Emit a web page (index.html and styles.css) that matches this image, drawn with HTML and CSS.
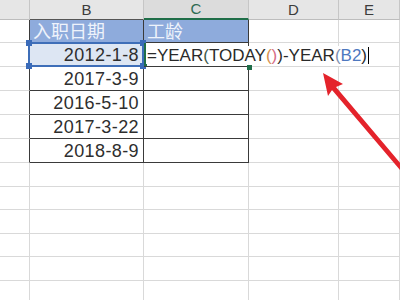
FILE: index.html
```html
<!DOCTYPE html>
<html lang="zh-CN">
<head>
    <meta charset="UTF-8">
    <title>工龄计算</title>
    <link rel="stylesheet" href="styles.css">
</head>
<body>
    <div class="sheet-wrap">
        <table class="sheet">
            <colgroup>
                <col class="col-a">
                <col class="col-b">
                <col class="col-c">
                <col class="col-d">
                <col class="col-e">
            </colgroup>
            <tr class="colhead">
                <th></th>
                <th class="tb-top">B</th>
                <th class="tb-top active">C</th>
                <th>D</th>
                <th>E</th>
            </tr>
            <tr class="r-title">
                <td class="tl"></td>
                <td class="tb title">入职日期</td>
                <td class="tb title">工龄</td>
                <td></td>
                <td></td>
            </tr>
            <tr>
                <td class="tl"></td>
                <td class="tb date picked">2012-1-8<span class="sel"><i class="h h1"></i><i class="h h2"></i><i class="h h3"></i><i class="h h4"></i></span></td>
                <td class="tb editing"><span class="edit">=YEAR<span class="p1">(</span>TODAY<span class="p2">(</span><span class="p3">)</span>)-YEAR<span class="p4">(</span><span class="ref">B2</span>)<span class="caret"></span></span><i class="fill"></i></td>
                <td></td>
                <td></td>
            </tr>
            <tr>
                <td class="tl"></td>
                <td class="tb date">2017-3-9</td>
                <td class="tb"></td>
                <td></td>
                <td></td>
            </tr>
            <tr>
                <td class="tl"></td>
                <td class="tb date">2016-5-10</td>
                <td class="tb"></td>
                <td></td>
                <td></td>
            </tr>
            <tr>
                <td class="tl"></td>
                <td class="tb date">2017-3-22</td>
                <td class="tb"></td>
                <td></td>
                <td></td>
            </tr>
            <tr>
                <td class="tl"></td>
                <td class="tb date">2018-8-9</td>
                <td class="tb"></td>
                <td></td>
                <td></td>
            </tr>
            <tr class="r-low"><td></td><td></td><td></td><td></td><td></td></tr>
            <tr class="r-low"><td></td><td></td><td></td><td></td><td></td></tr>
            <tr class="r-low"><td></td><td></td><td></td><td></td><td></td></tr>
            <tr class="r-low"><td></td><td></td><td></td><td></td><td></td></tr>
            <tr class="r-low"><td></td><td></td><td></td><td></td><td></td></tr>
            <tr class="r-low"><td></td><td></td><td></td><td></td><td></td></tr>
        </table>

        <!-- 红色箭头 -->
        <svg class="arrow" width="400" height="300" viewBox="0 0 400 300">
            <polygon fill="#e4232b" points="323,73 343,84 336,87 402,165 400,170 332,90 328,96"/>
        </svg>
    </div>
</body>
</html>
```

FILE: styles.css
```css
body {
    margin: 0;
    background: #fff;
    font-family: "Liberation Sans", "Noto Sans CJK SC", sans-serif;
    overflow: hidden;
}
.sheet-wrap {
    position: relative;
    width: 400px;
    height: 300px;
    overflow: hidden;
}
.sheet {
    border-collapse: separate;
    border-spacing: 0;
    table-layout: fixed;
    width: 400px;
}
.col-a { width: 30px; }
.col-b { width: 114px; }
.col-c { width: 105px; }
.col-d { width: 90px; }
.col-e { width: 61px; }

td, th {
    padding: 0;
    box-sizing: border-box;
    border-right: 1px solid #d9d9d9;
    border-bottom: 1px solid #d9d9d9;
}
tr { height: 24px; }
tr.r-low { height: 23.6px; }

/* 列标题 */
.colhead { height: 19px; }
.colhead th {
    background: #e6e6e6;
    border-right-color: #c6c6c6;
    border-bottom-color: #bdbdbd;
    font-weight: normal;
    font-size: 15px;
    color: #3c3c3c;
    line-height: 18px;
    vertical-align: middle;
}
.colhead th.tb-top {
    border-bottom-color: #555;
}
.colhead th.active {
    background: #dcdcdc;
    color: #2d6a52;
    border-bottom: 2px solid #1f6e48;
}

.r-title { height: 23px; }

/* 表格黑色边框 */
td.tl { border-right-color: #3a3a3a; }
td.tb {
    border-right-color: #3a3a3a;
    border-bottom-color: #3a3a3a;
}

.title {
    background: #8eabdc;
    color: #eef3fb;
    font-size: 18px;
    line-height: 20px;
    vertical-align: bottom;
    padding-left: 3px;
    white-space: nowrap;
}
.date {
    text-align: right;
    vertical-align: bottom;
    padding-right: 4px;
    font-size: 18px;
    line-height: 21px;
    letter-spacing: 0.4px;
    color: #2e2e2e;
}

/* 选中的 B2 */
.picked {
    position: relative;
    background: #dde6f3;
}
.sel {
    position: absolute;
    left: -2px;
    top: -1px;
    right: -1px;
    bottom: -1px;
    border: 2px solid #3e6eb8;
}
.h {
    position: absolute;
    width: 6px;
    height: 6px;
    background: #3a6bb9;
}
.h1 { left: -4px; top: -4px; }
.h2 { right: -4px; top: -4px; }
.h3 { left: -4px; bottom: -4px; }
.h4 { right: -4px; bottom: -4px; }

/* 编辑中的 C2 */
.editing {
    position: relative;
    white-space: nowrap;
    vertical-align: bottom;
    border-top: 0;
    box-shadow: inset 2px 0 0 #1f6e48, inset 0 -2px 0 #1f6e48;
}
.edit {
    position: relative;
    z-index: 2;
    display: inline-block;
    background: #fff;
    margin-left: 3px;
    padding-right: 4px;
    font-size: 17px;
    line-height: 20px;
    color: #2a2a2a;
}
.p1 { color: #3d5a4a; }
.p2 { color: #d6904c; }
.p3 { color: #d66a86; }
.p4 { color: #7d8fb0; }
.ref { color: #4e78bf; }
.caret {
    display: inline-block;
    width: 1px;
    height: 17px;
    background: #000;
    vertical-align: -3px;
    margin-left: 1px;
}
.fill {
    position: absolute;
    right: -4px;
    bottom: -4px;
    width: 5px;
    height: 5px;
    background: #1f6e48;
    z-index: 3;
}

.arrow {
    position: absolute;
    left: 0;
    top: 0;
    pointer-events: none;
}
```
